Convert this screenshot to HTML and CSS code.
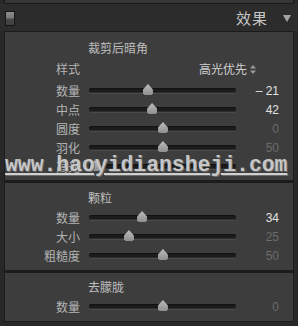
FILE: index.html
```html
<!DOCTYPE html>
<html>
<head>
<meta charset="utf-8">
<link rel="stylesheet" href="styles.css">
</head>
<body>
<div class="top-strip"></div>
<header class="panel-head">
  <span class="toggle"></span>
  <span class="head-title">效果</span>
  <svg class="tri" width="8" height="7" viewBox="0 0 8 7"><path d="M0 0 H8 L4 7 Z" fill="#a4a4a4"/></svg>
</header>
<div class="panel">
  <section class="sec s1">
    <div class="sec-title">裁剪后暗角</div>
    <div class="row style-row"><span class="lbl">样式</span><span class="popup">高光优先<svg class="updown" width="6" height="9" viewBox="0 0 6 9"><path d="M3 0 L6 3.5 H0 Z M3 9 L6 5.5 H0 Z" fill="#9a9a9a"/></svg></span></div>
    <div class="row"><span class="lbl">数量</span><div class="track"><span class="thumb" style="left:40.1%"></span></div><span class="val on">–&nbsp;21</span></div>
    <div class="row"><span class="lbl">中点</span><div class="track"><span class="thumb" style="left:42.9%"></span></div><span class="val on">42</span></div>
    <div class="row"><span class="lbl">圆度</span><div class="track"><span class="thumb" style="left:50.3%"></span></div><span class="val">0</span></div>
    <div class="row"><span class="lbl">羽化</span><div class="track"><span class="thumb" style="left:50.3%"></span></div><span class="val">50</span></div>
    <div class="row"><span class="lbl">高光</span><div class="track"><span class="thumb" style="left:4.1%"></span></div><span class="val">0</span></div>
  </section>
  <section class="sec s2">
    <div class="sec-title">颗粒</div>
    <div class="row"><span class="lbl">数量</span><div class="track"><span class="thumb" style="left:36.1%"></span></div><span class="val on">34</span></div>
    <div class="row"><span class="lbl">大小</span><div class="track"><span class="thumb" style="left:27.2%"></span></div><span class="val">25</span></div>
    <div class="row"><span class="lbl">粗糙度</span><div class="track"><span class="thumb" style="left:50.3%"></span></div><span class="val">50</span></div>
  </section>
  <section class="sec s3">
    <div class="sec-title">去朦胧</div>
    <div class="row"><span class="lbl">数量</span><div class="track"><span class="thumb" style="left:50.3%"></span></div><span class="val">0</span></div>
  </section>
  <div class="watermark">www.haoyidiansheji.com</div>
</div>
</body>
</html>
```
FILE: styles.css
```css
* { box-sizing: border-box; }
html, body { margin: 0; padding: 0; }
body {
  width: 298px;
  height: 326px;
  background: #282828;
  font-family: "Noto Sans CJK SC", "Noto Sans", sans-serif;
  overflow: hidden;
}
.top-strip {
  height: 4px;
  margin: 0 4px;
  background: #363636;
  border: 1px solid #1a1a1a;
  border-top: none;
}
.panel-head {
  height: 27px;
  display: flex;
  align-items: center;
  padding: 0 7px 0 5px;
  background: #2c2c2c;
}
.toggle {
  width: 10px;
  height: 15px;
  border: 1px solid #161616;
  background: linear-gradient(#8c8c8c 0, #7a7a7a 45%, #4a4a4a 55%, #3e3e3e 100%);
  margin-top: 2px;
}
.head-title {
  margin-left: auto;
  font-size: 15px;
  line-height: 18px;
  color: #c6c6c6;
  letter-spacing: 1px;
}
.tri { margin-left: 15px; margin-top: 1px; }
.panel {
  position: relative;
  margin: 0 4px;
  background: #1c1c1c;
  padding: 1px;
  display: flex;
  flex-direction: column;
  gap: 3px;
}
.sec {
  background: #3d3d3d;
  display: flex;
  flex-direction: column;
}
.s1 { height: 148px; padding-top: 8px; }
.s2 { height: 87px; padding-top: 7px; }
.s3 { height: 48px; padding-top: 6px; }
.sec-title {
  height: 16px;
  line-height: 16px;
  font-size: 12px;
  color: #bebebe;
  padding-left: 83px;
}
.s1 .sec-title { margin-bottom: 4px; }
.s2 .sec-title, .s3 .sec-title { margin-bottom: 2px; }
.row {
  height: 19px;
  display: flex;
  align-items: center;
}
.style-row { height: 18px; margin-bottom: 3px; }
.lbl {
  width: 75px;
  text-align: right;
  font-size: 12px;
  line-height: 14px;
  color: #b4b4b4;
}
.popup {
  margin-left: 119px;
  font-size: 12px;
  line-height: 14px;
  color: #d0d0d0;
  display: flex;
  align-items: center;
}
.updown { margin-left: 3px; }
.track {
  position: relative;
  margin-left: 9px;
  width: 147px;
  height: 5px;
  border-radius: 3px;
  background: #1b1b1b;
  box-shadow: inset 0 1px 0 #111, inset 0 -1px 0 #2e2e2e, 0 1px 0 #4a4a4a;
}
.thumb {
  position: absolute;
  top: -4px;
  width: 10px;
  height: 11px;
  transform: translateX(-50%);
  background: linear-gradient(#bdbdbd, #8e8e8e);
  clip-path: polygon(50% 0, 100% 50%, 100% 85%, 85% 100%, 15% 100%, 0 85%, 0 50%);
}
.val {
  width: 43px;
  text-align: right;
  font-family: "Liberation Sans", "Noto Sans", sans-serif;
  font-size: 12px;
  line-height: 14px;
  color: #6c6c6c;
}
.val.on { color: #e2e2e2; }
.watermark {
  position: absolute;
  left: 1px;
  top: 122px;
  font-family: "Liberation Mono", monospace;
  font-weight: bold;
  font-size: 21.4px;
  line-height: 24px;
  color: #c6c6c6;
  text-decoration: underline;
  text-decoration-color: #d0d0d0;
  text-decoration-thickness: 2px;
  text-underline-offset: 2px;
  text-shadow: 1px 1px 0 #6a6a6a;
  white-space: nowrap;
}
```
